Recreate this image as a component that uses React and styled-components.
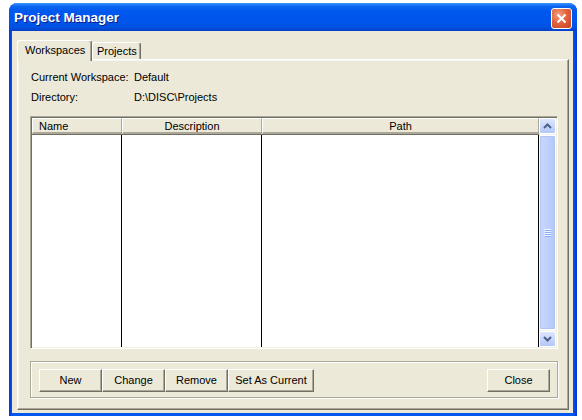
import React from 'react';
import styled, { createGlobalStyle } from 'styled-components';

const GlobalStyle = createGlobalStyle`
  html, body {
    margin: 0;
    padding: 0;
    background: #ffffff;
  }
  body {
    font-family: "Liberation Sans", Arial, sans-serif;
    font-size: 11px;
    color: #000;
  }
`;

const Window = styled.div`
  margin: 3px 0 0 9px;
  width: 568px;
  height: 413px;
  box-sizing: border-box;
  display: flex;
  flex-direction: column;
  padding: 0 4px 3px 3px;
  border-radius: 8px 8px 0 0;
  background: linear-gradient(90deg, #0831D9 0px, #0058EE 3px, #0058EE 564px, #0831D9 568px);
  overflow: hidden;
`;

const TitleBar = styled.div`
  height: 28px;
  margin: 0 -4px 0 -3px;
  padding: 0 5px 0 3px;
  display: flex;
  align-items: center;
  justify-content: space-between;
  border-radius: 8px 8px 0 0;
  background: linear-gradient(180deg,
    #3D95FF 0%, #0A66F0 12%, #0058EE 30%, #0055EB 70%, #0250E0 88%, #0640C8 100%);
`;

const Title = styled.span`
  font-family: "Liberation Sans", Arial, sans-serif;
  font-weight: bold;
  font-size: 13.5px;
  color: #ffffff;
  text-shadow: 1px 1px #0A1883;
  padding-left: 2px;
  margin-top: 1px;
`;

const CloseButton = styled.div`
  width: 19px;
  height: 19px;
  border: 1px solid #ffffff;
  border-radius: 3px;
  display: flex;
  align-items: center;
  justify-content: center;
  margin-top: 2px;
  background: radial-gradient(circle at 35% 30%, #F0A080 0%, #E2643E 45%, #C7411E 100%);
`;

const Body = styled.div`
  flex: 1;
  background: #ECE9D8;
  display: flex;
  flex-direction: column;
  padding: 9px 4px 3px 5px;
`;

const TabStrip = styled.div`
  height: 19px;
  display: flex;
  align-items: flex-end;
`;

const Tab = styled.div`
  position: relative;
  z-index: ${p => (p.$active ? 2 : 1)};
  box-sizing: border-box;
  height: ${p => (p.$active ? '21px' : '17px')};
  margin-bottom: ${p => (p.$active ? '-2px' : '0')};
  padding: ${p => (p.$active ? '3px 0 0 7px' : '2px 0 0 4px')};
  width: ${p => p.$w}px;
  background: #ECE9D8;
  border-top: 1px solid #ffffff;
  border-left: 1px solid #ffffff;
  border-right: 1px solid #716F64;
  box-shadow: inset -1px 0 #ACA899;
  border-radius: 3px 3px 0 0;
  white-space: nowrap;
`;

const Panel = styled.div`
  flex: 1;
  display: flex;
  flex-direction: column;
  border-top: 1px solid #ffffff;
  border-left: 1px solid #ffffff;
  border-right: 1px solid #716F64;
  border-bottom: 1px solid #716F64;
  box-shadow: inset -1px -1px #ACA899, inset 1px 1px #F5F4EE;
  padding: 7px 10px 11px 12px;
`;

const InfoGrid = styled.div`
  display: grid;
  grid-template-columns: 103px 1fr;
  grid-auto-rows: 20px;
  align-items: center;
  padding-left: 1px;
`;

const ListView = styled.div`
  margin-top: 9px;
  height: 233px;
  box-sizing: border-box;
  display: flex;
  border-top: 1px solid #ACA899;
  border-left: 1px solid #ACA899;
  border-right: 1px solid #ffffff;
  border-bottom: 1px solid #ffffff;
  box-shadow: inset 1px 1px #716F64, inset -1px -1px #F1EFE2;
  padding: 1px;
  background: #ffffff;
`;

const Table = styled.div`
  flex: 1;
  display: grid;
  grid-template-columns: 90px 140px 1fr;
  grid-template-rows: 16px 1fr;
`;

const HeaderCell = styled.div`
  box-sizing: border-box;
  background: #ECE9D8;
  border-top: 1px solid #ffffff;
  border-left: 1px solid #ffffff;
  border-right: 1px solid #ACA899;
  border-bottom: 2px solid #ACA899;
  box-shadow: 0 1px #716F64;
  display: flex;
  align-items: center;
  justify-content: ${p => (p.$left ? 'flex-start' : 'center')};
  padding-left: ${p => (p.$left ? '6px' : '0')};
  line-height: 12px;
  position: relative;
  z-index: 1;
`;

const Column = styled.div`
  border-right: 1px solid #000000;
`;

const ScrollBar = styled.div`
  width: 17px;
  display: flex;
  flex-direction: column;
  background: #F4F3EE;
  gap: 1px;
`;

const ArrowButton = styled.div`
  height: 16px;
  box-sizing: border-box;
  border: 1px solid #ffffff;
  border-radius: 2px;
  background: linear-gradient(180deg, #DCE6FE 0%, #C3D3FD 60%, #B4C7F8 100%);
  display: flex;
  align-items: center;
  justify-content: center;
`;

const Thumb = styled.div`
  flex: 1;
  box-sizing: border-box;
  border: 1px solid #ffffff;
  border-radius: 2px;
  background: linear-gradient(90deg, #C8D6FD 0%, #BED0FC 50%, #B4C8F8 100%);
  box-shadow: inset 0 0 0 1px #B0C3F3;
  display: flex;
  align-items: center;
  justify-content: center;
`;

const GroupBox = styled.div`
  margin-top: 12px;
  height: 37px;
  box-sizing: border-box;
  border: 1px solid #ACA899;
  box-shadow: inset 1px 1px #ffffff, 1px 1px #ffffff;
  display: flex;
  align-items: center;
  padding: 0 7px 0 8px;
`;

const ButtonRow = styled.div`
  display: flex;
  flex: 1;
`;

const Button = styled.div`
  width: ${p => p.$w}px;
  height: 23px;
  box-sizing: border-box;
  margin-top: 1px;
  border-top: 1px solid #ffffff;
  border-left: 1px solid #ffffff;
  border-right: 1px solid #716F64;
  border-bottom: 1px solid #716F64;
  box-shadow: inset -1px -1px #ACA899;
  background: #ECE9D8;
  display: flex;
  align-items: center;
  justify-content: center;
  font-size: 11px;
  white-space: nowrap;
`;

const Chevron = ({ up }) => (
  <svg width="9" height="6" viewBox="0 0 9 6">
    <polyline
      points={up ? '1,5 4.5,1.5 8,5' : '1,1 4.5,4.5 8,1'}
      fill="none"
      stroke="#4D6185"
      strokeWidth="2"
    />
  </svg>
);

const Grip = () => (
  <svg width="7" height="8" viewBox="0 0 7 8">
    {[0.5, 2.5, 4.5, 6.5].map(y => (
      <line key={y} x1="0" x2="7" y1={y} y2={y} stroke="#EEF4FE" strokeWidth="1" />
    ))}
    {[1.5, 3.5, 5.5, 7.5].map(y => (
      <line key={y} x1="1" x2="7" y1={y} y2={y} stroke="#8CB0F8" strokeWidth="1" />
    ))}
  </svg>
);

const buttons = [
  { label: 'New', w: 63 },
  { label: 'Change', w: 63 },
  { label: 'Remove', w: 63 },
  { label: 'Set As Current', w: 86 },
];

export default function App() {
  return (
    <>
      <GlobalStyle />
      <Window>
        <TitleBar>
          <Title>Project Manager</Title>
          <CloseButton>
            <svg width="11" height="11" viewBox="0 0 11 11">
              <path d="M1.5 1.5 L9.5 9.5 M9.5 1.5 L1.5 9.5" stroke="#ffffff" strokeWidth="2" />
            </svg>
          </CloseButton>
        </TitleBar>
        <Body>
          <TabStrip>
            <Tab $active $w={75}>Workspaces</Tab>
            <Tab $w={49}>Projects</Tab>
          </TabStrip>
          <Panel>
            <InfoGrid>
              <span>Current Workspace:</span>
              <span>Default</span>
              <span>Directory:</span>
              <span>D:\DISC\Projects</span>
            </InfoGrid>
            <ListView>
              <Table>
                <HeaderCell $left>Name</HeaderCell>
                <HeaderCell>Description</HeaderCell>
                <HeaderCell>Path</HeaderCell>
                <Column />
                <Column />
                <Column />
              </Table>
              <ScrollBar>
                <ArrowButton><Chevron up /></ArrowButton>
                <Thumb><Grip /></Thumb>
                <ArrowButton><Chevron /></ArrowButton>
              </ScrollBar>
            </ListView>
            <GroupBox>
              <ButtonRow>
                {buttons.map(b => (
                  <Button key={b.label} $w={b.w}>{b.label}</Button>
                ))}
              </ButtonRow>
              <Button $w={63}>Close</Button>
            </GroupBox>
          </Panel>
        </Body>
      </Window>
    </>
  );
}
